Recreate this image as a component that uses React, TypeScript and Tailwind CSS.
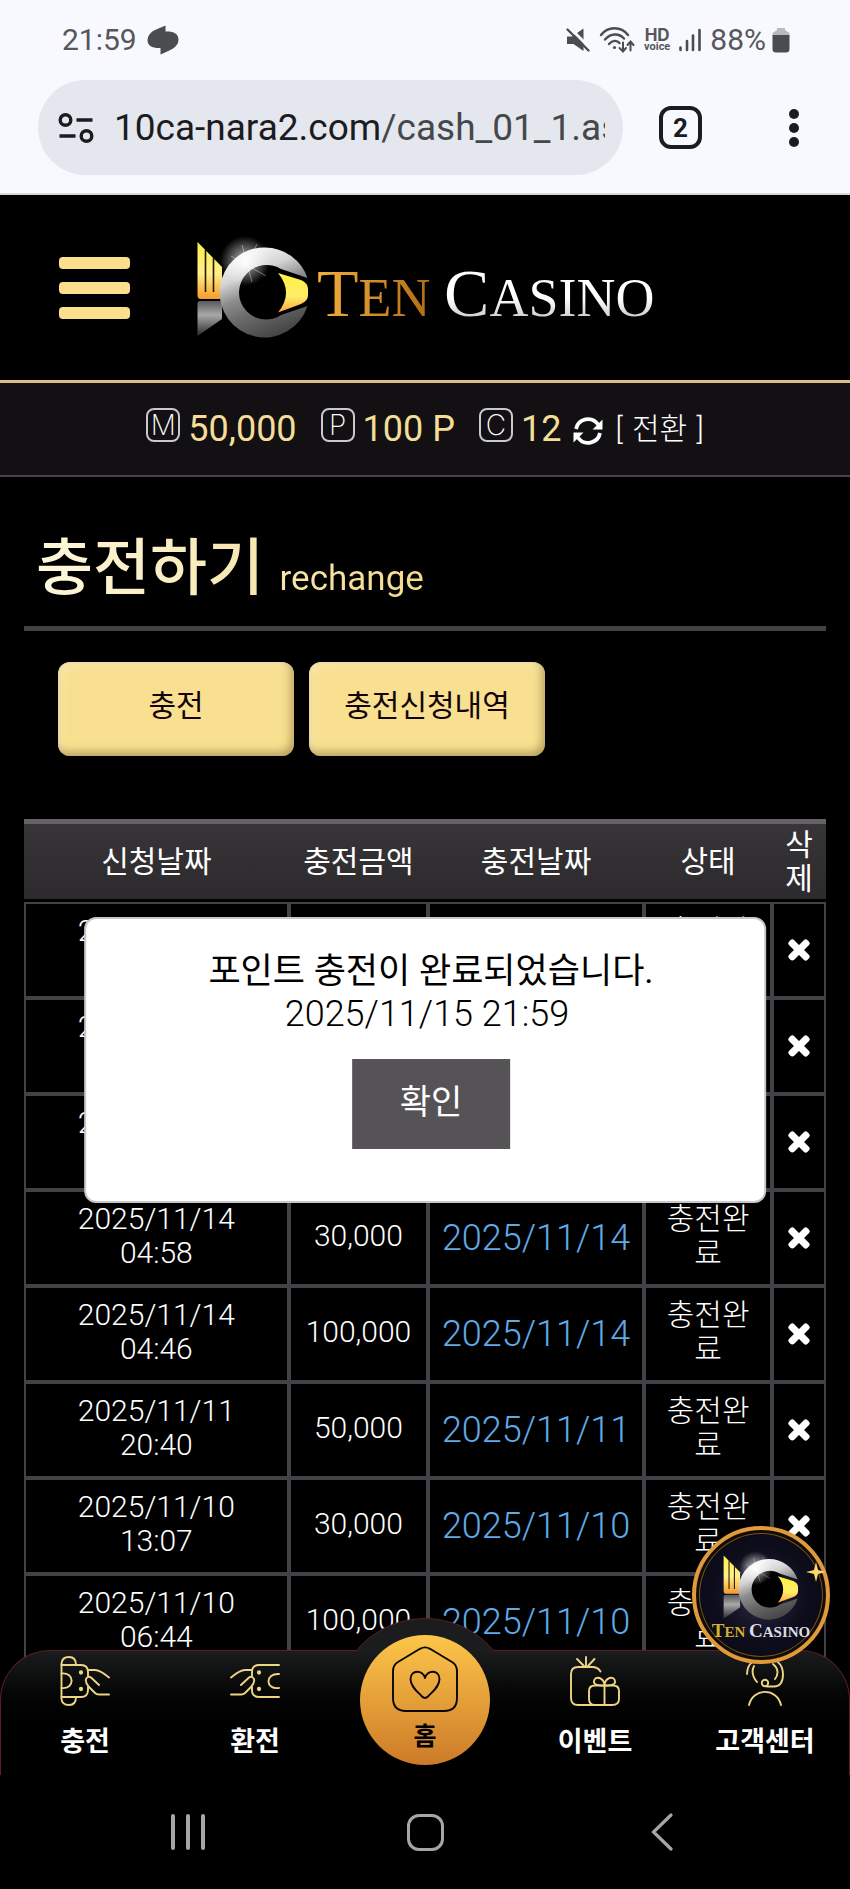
import { useId } from 'react';
import type { ReactNode } from 'react';
import { FaTimes } from 'react-icons/fa';

type Deposit = {
  requested: string;
  time: string;
  amount: string;
  charged: string;
};

const DEPOSITS: Deposit[] = [
  { requested: '2025/11/15', time: '21:58', amount: '50,000', charged: '2025/11/15' },
  { requested: '2025/11/15', time: '17:20', amount: '30,000', charged: '2025/11/15' },
  { requested: '2025/11/14', time: '22:31', amount: '50,000', charged: '2025/11/14' },
  { requested: '2025/11/14', time: '04:58', amount: '30,000', charged: '2025/11/14' },
  { requested: '2025/11/14', time: '04:46', amount: '100,000', charged: '2025/11/14' },
  { requested: '2025/11/11', time: '20:40', amount: '50,000', charged: '2025/11/11' },
  { requested: '2025/11/10', time: '13:07', amount: '30,000', charged: '2025/11/10' },
  { requested: '2025/11/10', time: '06:44', amount: '100,000', charged: '2025/11/10' },
];

const COLUMNS = [
  { label: '신청날짜', width: 'w-[33%]' },
  { label: '충전금액', width: 'w-[17.4%]' },
  { label: '충전날짜', width: 'w-[26.9%]' },
  { label: '상태', width: 'w-[16%]' },
  { label: '삭제', width: 'w-[6.7%]' },
];

function LogoMark({ className }: { className?: string }) {
  const id = useId();
  return (
    <svg viewBox="0 0 112 104" className={className} aria-hidden="true">
      <defs>
        <linearGradient id={`${id}ring`} x1="0.2" y1="0" x2="0.6" y2="1">
          <stop offset="0" stopColor="#ffffff" />
          <stop offset="0.3" stopColor="#d5d5d5" />
          <stop offset="0.5" stopColor="#8d8d8d" />
          <stop offset="0.7" stopColor="#6a6a6a" />
          <stop offset="1" stopColor="#454545" />
        </linearGradient>
        <linearGradient id={`${id}fan`} x1="0" y1="0" x2="0" y2="1">
          <stop offset="0" stopColor="#fff04a" />
          <stop offset="0.55" stopColor="#fff08a" />
          <stop offset="1" stopColor="#f59a2c" />
        </linearGradient>
        <linearGradient id={`${id}tail`} x1="0" y1="0" x2="0" y2="1">
          <stop offset="0" stopColor="#5a5a5a" />
          <stop offset="0.4" stopColor="#a8a8a8" />
          <stop offset="1" stopColor="#2a2a2a" />
        </linearGradient>
        <linearGradient id={`${id}eye`} x1="0" y1="0" x2="0" y2="1">
          <stop offset="0" stopColor="#fff23c" />
          <stop offset="0.6" stopColor="#ffec6a" />
          <stop offset="1" stopColor="#fba53a" />
        </linearGradient>
        <radialGradient id={`${id}glow`}>
          <stop offset="0" stopColor="#fff" stopOpacity="0.95" />
          <stop offset="0.4" stopColor="#fff" stopOpacity="0.45" />
          <stop offset="1" stopColor="#fff" stopOpacity="0" />
        </radialGradient>
      </defs>
      <path d="M0.5 8 L25 33 V65 H3.500 Q0.500 65 0.500 61 Z" fill={`url(#${id}fan)`} />
      <path d="M8.500 16 V58 M16.500 24 V58" stroke="#2a1a00" strokeWidth="1.600" />
      <path d="M0.500 69 Q0.500 67 3 67 H25 V85 L0.500 102 Z" fill={`url(#${id}tail)`} />
      <path
        d="M68 13.500 A45 45 0 0 1 110.500 44 L84 35 A27 27 0 1 0 84 81 L110.500 72 A45 45 0 1 1 68 13.500 Z"
        fill={`url(#${id}ring)`}
      />
      <circle cx="69" cy="58.500" r="27" fill="#000" />
      <path d="M81 39 L104 46 Q111 49 111 55 V61 Q111 67 104 70 L81 78.500 Q97 58.500 81 39 Z" fill={`url(#${id}eye)`} />
      <circle cx="48" cy="27" r="25" fill={`url(#${id}glow)`} />
      <path d="M45 11 L55 48 M34 22 L69 42 M60 10 L46 38" stroke="#fff" strokeOpacity="0.5" strokeWidth="0.800" />
    </svg>
  );
}

function BalanceItem({ mark, value }: { mark: string; value: string }) {
  return (
    <div className="flex items-center gap-2">
      <span className="grid h-[34px] w-[34px] -translate-y-1 place-items-center rounded-lg border-2 border-[#c9c8cc] font-['Inter'] text-[28px] font-extralight leading-none text-white">
        {mark}
      </span>
      <span className="text-[36px] leading-none text-[#f4de97]">{value}</span>
    </div>
  );
}

function StatusBar() {
  return (
    <div className="flex h-20 items-center justify-between pl-[62px] pr-[60px] text-[30px] leading-none text-[#56575b]">
      <div className="flex items-center gap-[10px]">
        <span>21:59</span>
        <svg viewBox="0 0 32 30" className="h-[30px] w-8" fill="#4b4c50" aria-hidden="true">
          <path d="M18.500 0.500 V6.500 C26 6 31.500 8.500 31.500 14.500 C31.500 23 22 25.500 17 28 L13.500 29.500 V23 C6 23.500 0.500 21 0.500 15.500 C0.500 7 9 4.500 14 2.500 Z" />
        </svg>
      </div>
      <div className="flex items-center gap-[9px]">
        <svg viewBox="0 0 24 24" className="h-6 w-6" aria-hidden="true">
          <path d="M1 8.500 H6 L17.500 0.500 V23 L7.500 16 H1 Z" fill="#4b4c50" />
          <path d="M3 -1 L25 21" stroke="#f8f9fe" strokeWidth="3" />
          <path d="M1.500 1.500 L22.500 22.500" stroke="#4b4c50" strokeWidth="2.400" strokeLinecap="round" />
        </svg>
        <svg viewBox="0 0 36 28" className="h-7 w-9" fill="none" stroke="#4b4c50" strokeWidth="2.400" strokeLinecap="round" aria-hidden="true">
          <path d="M2 9 C9 0 22 0 29 9 M6 13.500 C11.500 7 20 7 25 12.500 M10 18 C13.500 14 18 14 20.500 17" />
          <circle cx="15.500" cy="21.500" r="1.600" fill="#4b4c50" stroke="none" />
          <path d="M24 16.500 V25 M20.500 22 L24 25.500 L27 22 M31.500 24.500 V16 M28.500 19 L31.500 15.500 L34.500 19" strokeWidth="2" />
        </svg>
        <span className="flex flex-col items-center font-bold">
          <span className="font-['Inter'] text-[17px] leading-[14px]">HD</span>
          <span className="text-[11px] leading-[10px]">voice</span>
        </span>
        <svg viewBox="0 0 22 24" className="h-6 w-[22px]" stroke="#4b4c50" strokeWidth="2.600" strokeLinecap="round" aria-hidden="true">
          <path d="M1.500 19.500 V22 M8 13 V22 M14 7.500 V22 M20.500 2 V22" />
        </svg>
        <span className="flex items-center gap-[6px]">
          88%
          <svg viewBox="0 0 18 26" className="h-[26px] w-[18px]" aria-hidden="true">
            <path d="M5 1 H13 V3 L17.500 6 V9 H0.500 V6 L5 3 Z" fill="#b9babe" />
            <path d="M0.500 8 H17.500 V22 Q17.500 25.500 14 25.500 H4 Q0.500 25.500 0.500 22 Z" fill="#4b4c50" />
          </svg>
        </span>
      </div>
    </div>
  );
}

function BrowserBar() {
  return (
    <div className="flex h-[95px] items-center pl-[38px] pr-[42px]">
      <button
        type="button"
        className="flex h-full min-w-0 flex-1 items-center gap-5 rounded-full bg-[#e5e7ee] pl-5 pr-[18px] text-left"
      >
        <svg viewBox="0 0 36 30" className="h-[30px] w-9 shrink-0" fill="none" stroke="#1b1c21" strokeWidth="3.400" aria-hidden="true">
          <circle cx="7.500" cy="7" r="5.300" />
          <circle cx="28.500" cy="23" r="5.300" />
          <path d="M18.500 7 H34.500 M1.500 23 H17.500" />
        </svg>
        <span className="overflow-hidden whitespace-nowrap text-[37px] leading-[56px] text-[#1b1c21]">
          10ca-nara2.com<span className="text-[#44474c]">/cash_01_1.as</span>
        </span>
      </button>
      <button
        type="button"
        aria-label="탭 2개"
        className="ml-9 grid h-[43px] w-[43px] place-items-center rounded-xl border-4 border-[#1b1c21] text-[26px] font-bold leading-none text-[#1b1c21]"
      >
        2
      </button>
      <button type="button" aria-label="메뉴" className="ml-[78px] grid w-7 place-items-center gap-1">
        <span className="h-[10px] w-[10px] rounded-full bg-[#1b1c21]" />
        <span className="h-[10px] w-[10px] rounded-full bg-[#1b1c21]" />
        <span className="h-[10px] w-[10px] rounded-full bg-[#1b1c21]" />
      </button>
    </div>
  );
}

function SiteHeader() {
  return (
    <header>
      <div className="flex h-[185px] items-center pl-[59px]">
        <button type="button" aria-label="전체 메뉴" className="grid w-[71px] gap-[13px]">
          <span className="h-3 rounded-sm bg-[#fbdf8c]" />
          <span className="h-3 rounded-sm bg-[#fbdf8c]" />
          <span className="h-3 rounded-sm bg-[#fbdf8c]" />
        </button>
        <a href="#home" className="ml-[67px] flex items-center">
          <LogoMark className="mb-1 h-[104px] w-[112px]" />
          <span className="mt-4 ml-2 whitespace-nowrap font-['Liberation_Serif',serif] text-[54px] leading-[80px]">
            <span className="bg-linear-to-r from-[#f5b03c] to-[#b06d14] bg-clip-text text-transparent">
              <span className="text-[68px]">T</span>EN
            </span>{' '}
            <span className="bg-linear-to-b from-white from-50% to-[#b5b5b5] bg-clip-text text-transparent">
              <span className="text-[68px]">C</span>ASINO
            </span>
          </span>
        </a>
      </div>
      <div className="flex h-[97px] items-center justify-center gap-6 border-t-[3px] border-b-2 border-t-[#dcbd85] border-b-[#47454a] bg-[#121013]">
        <BalanceItem mark="M" value="50,000" />
        <BalanceItem mark="P" value="100 P" />
        <div className="flex items-center gap-3">
          <BalanceItem mark="C" value="12" />
          <button type="button" className="flex items-center gap-3 text-[30px] font-light leading-none text-white">
            <svg viewBox="0 0 30 30" className="h-[30px] w-[30px] translate-y-0.5" fill="none" stroke="#fff" strokeWidth="3.800" aria-hidden="true">
              <path d="M3 13 A12.200 12.200 0 0 1 25 8.500 M27 17 A12.200 12.200 0 0 1 5 21.500" />
              <path d="M29.500 3.500 V13.500 H19.500 Z M0.500 26.500 V16.500 H10.500 Z" fill="#fff" stroke="none" />
            </svg>
            <span>
              [ <span className="mx-0.5">전환</span> ]
            </span>
          </button>
        </div>
      </div>
    </header>
  );
}

function GoldButton({ children }: { children: ReactNode }) {
  return (
    <button
      type="button"
      className="h-[94px] w-[236px] rounded-xl bg-[#f8e090] pb-2 text-[30px] text-[#120408] shadow-[inset_-3px_-4px_8px_rgba(120,95,40,0.5),inset_3px_3px_8px_rgba(255,240,200,0.7)]"
    >
      {children}
    </button>
  );
}

function DepositTable() {
  return (
    <table className="w-full table-fixed border-separate border-spacing-0 text-center text-[30px] leading-[34px] text-white">
      <thead>
        <tr className="h-[83px]">
          {COLUMNS.map((col) => (
            <th
              key={col.label}
              className={`${col.width} border-t-[5px] border-b-[3px] border-t-[#656366] border-b-black bg-linear-to-b from-[#373538] to-[#2c2a2d] bg-clip-padding p-0 font-normal`}
            >
              {col.label}
            </th>
          ))}
        </tr>
      </thead>
      <tbody className="font-light">
        {DEPOSITS.map((row) => (
          <tr key={`${row.requested} ${row.time}`} className="h-24">
            <td className="border-2 border-[#444246] px-10 pt-0 pb-1">
              {row.requested} {row.time}
            </td>
            <td className="border-2 border-[#444246] p-0 pb-1">{row.amount}</td>
            <td className="border-2 border-[#444246] p-0 text-[36px] text-[#5eaae6]">{row.charged}</td>
            <td className="border-2 border-[#444246] px-4 pt-0 pb-1">충전완료</td>
            <td className="border-2 border-[#444246] p-0 pb-1">
              <button type="button" aria-label="삭제" className="inline-grid place-items-center align-middle">
                <FaTimes className="h-7 w-7" stroke="currentColor" strokeWidth="36" />
              </button>
            </td>
          </tr>
        ))}
      </tbody>
    </table>
  );
}

function ConfirmDialog() {
  return (
    <div
      role="dialog"
      aria-label="충전 완료"
      className="absolute top-[98px] left-1/2 flex h-[286px] w-[85%] -translate-x-1/2 flex-col items-center rounded-xl border-2 border-[#c9c7c9] bg-white pt-8 pl-3 text-black"
    >
      <p className="text-[35px] leading-[42px]">포인트 충전이 완료되었습니다.</p>
      <p className="pr-2 text-[36px] font-light leading-[42px]">2025/11/15 21:59</p>
      <button type="button" className="mt-6 h-[90px] w-[158px] bg-[#565356] pb-1 text-[34px] text-white">
        확인
      </button>
    </div>
  );
}

function NavIcon({ children }: { children: ReactNode }) {
  return (
    <svg
      viewBox="0 0 50 50"
      className="h-[50px] w-[50px]"
      fill="none"
      stroke="#eed583"
      strokeWidth="1.900"
      strokeLinecap="round"
      strokeLinejoin="round"
      aria-hidden="true"
    >
      {children}
    </svg>
  );
}

function NavLink({ label, children }: { label: string; children: ReactNode }) {
  return (
    <a href="#menu" className="flex flex-1 flex-col items-center gap-4 pt-[6px] text-[27px] font-bold leading-[40px] text-white">
      {children}
      {label}
    </a>
  );
}

function BottomNav() {
  return (
    <nav className="absolute inset-x-0 bottom-0 h-[125px]">
      <div className="absolute inset-0 rounded-t-[50px] border border-b-0 border-[#5c1e22] bg-linear-to-b from-[#1b1c1d] to-black to-75%" />
      {/* raised arc behind the home button */}
      <div className="absolute -top-8 left-1/2 h-[34px] w-[142px] -translate-x-1/2 overflow-hidden">
        <div className="absolute top-0 left-1/2 h-[180px] w-[180px] -translate-x-1/2 rounded-full border border-[#5c1e22] bg-[#1b1c1d]" />
      </div>
      <div className="relative flex h-full">
        <NavLink label="충전">
          <NavIcon>
            <path d="M1.500 9 V41 M1.500 9 H21 Q28 9 28 16 V20 M28 31 V34 Q28 41 21 41 H1.500" />
            <path d="M1.500 9 V7.500 Q2 1 9 1 Q16 1 16 9 M1.500 41 V43 Q2 49 9 49 Q16 49 16 41" />
            <path d="M1.500 17.500 C15 16 15 33.500 1.500 32" />
            <path d="M28 14 H35 Q40 14 49 21.500 M39 29 L31 21.500 Q28 19.500 26 23 Q25 27 29 31 L35 37 Q36.500 38.500 39 38.500 H49" />
            <circle cx="21" cy="16.500" r="1.200" fill="#eed583" />
            <circle cx="21" cy="33" r="1.200" fill="#eed583" />
          </NavIcon>
        </NavLink>
        <NavLink label="환전">
          <NavIcon>
            <path d="M49 9 H29 Q22 9 22 16 V20 M22 31 V34 Q22 41 29 41 H49" />
            <path d="M49 18 C35 17 35 34 49 32" />
            <path d="M22 14 H15 Q10 14 1 21.500 M11 29 L19 21.500 Q22 19.500 24 23 Q25 27 21 31 L15 37 Q13.500 38.500 11 38.500 H1" />
            <circle cx="29" cy="16.500" r="1.200" fill="#eed583" />
            <circle cx="29" cy="33" r="1.200" fill="#eed583" />
          </NavIcon>
        </NavLink>
        <div className="relative flex-1">
          <a
            href="#home"
            className="absolute -top-[15px] left-1/2 flex h-[130px] w-[130px] -translate-x-1/2 flex-col items-center rounded-full bg-linear-to-b from-[#fdc64a] to-[#cc7a28] pt-[11px] text-[25px] font-bold leading-[50px] text-black"
          >
            <svg viewBox="0 0 66 66" className="h-[66px] w-[66px] shrink-0" fill="none" stroke="#0a0500" strokeWidth="1.900" strokeLinejoin="round" aria-hidden="true">
              <path d="M28 2.800 Q33 0 38 2.800 L60 16 Q65 19 65 25 V52 Q65 65 52 65 H14 Q1 65 1 52 V25 Q1 19 6 16 Z" />
              <path d="M33 32 C31 24 19 23 18.500 33 C18.500 41 26 46 30 50.500 Q33 53.500 36 50.500 C40 46 47.500 41 47.500 33 C47 23 35 24 33 32 Z" />
            </svg>
            홈
          </a>
        </div>
        <NavLink label="이벤트">
          <NavIcon>
            <path d="M16 10 V1 M14 10 L7 3 M18 10 L24.500 3" />
            <path d="M30.500 15.500 Q28 11 22 11 H8 Q1 11 1 18 V42 Q1 49 8 49 H42 Q49 49 49 43 V35 Q49 29.500 43 29.500 H25 Q19 29.500 19 35 V43 Q19 49 25 49" />
            <path d="M34.500 29.500 V49 M34.500 29.500 C30 30 23 29 24 25 C25 19.500 34 21 34.500 29.500 C35 21 44 19.500 45 25 C46 29 39 30 34.500 29.500" />
          </NavIcon>
        </NavLink>
        <NavLink label="고객센터">
          <NavIcon>
            <path d="M7 18 C7 -4 43 -4 43 18 C43 26 40 30.500 34 30.500 H27" />
            <path d="M17 26 C12 20 12 14 14 10 M33 8 C38 12 39 18 35 23" />
            <circle cx="25" cy="27" r="3.200" />
            <path d="M9 49 C13 31.500 37 31.500 41 49" />
          </NavIcon>
        </NavLink>
      </div>
      <a
        href="#top"
        className="absolute -top-[124px] right-5 flex h-[138px] w-[138px] flex-col items-center rounded-full border-4 border-[#e09a3c] bg-radial from-[#2d2b45] via-[#0e0d1c] to-[#07060d] pt-5 shadow-[inset_0_0_0_3px_#120c08,inset_0_0_0_4px_#77501f]"
      >
        <LogoMark className="h-[70px] w-[80px]" />
        <span className="whitespace-nowrap font-['Liberation_Serif',serif] text-[15px] font-bold leading-[22px] text-[#dcdce4]">
          <span className="text-[#d3b32b]">
            <span className="text-[19px]">T</span>EN
          </span>{' '}
          <span className="text-[19px]">C</span>ASINO
        </span>
        <svg viewBox="0 0 20 20" className="absolute top-8 right-0 h-5 w-5" fill="#ffd76a" aria-hidden="true">
          <path d="M10 0 L12 8 L20 10 L12 12 L10 20 L8 12 L0 10 L8 8 Z" />
        </svg>
      </a>
    </nav>
  );
}

function SystemBar() {
  return (
    <div className="flex h-[114px] shrink-0 items-center bg-black px-[70px] text-[#a8a5a9]">
      <button type="button" aria-label="최근 앱" className="flex h-9 flex-1 justify-center gap-[11px]">
        <span className="w-1 rounded-full bg-current" />
        <span className="w-1 rounded-full bg-current" />
        <span className="w-1 rounded-full bg-current" />
      </button>
      <button type="button" aria-label="홈 화면" className="flex flex-1 justify-center">
        <span className="h-[37px] w-[37px] rounded-xl border-[3px] border-current" />
      </button>
      <button type="button" aria-label="뒤로" className="flex flex-1 justify-center">
        <svg viewBox="0 0 22 38" className="h-[38px] w-[22px]" fill="none" stroke="currentColor" strokeWidth="3.200" strokeLinecap="round" aria-hidden="true">
          <path d="M20 2 L2.500 19 L20 36" />
        </svg>
      </button>
    </div>
  );
}

export default function App() {
  return (
    <div className="flex h-screen flex-col overflow-hidden bg-black font-['Roboto','Noto_Sans_CJK_KR',sans-serif]">
      <div className="h-[195px] shrink-0 border-b-2 border-[#d5d8da] bg-[#f8f9fe]">
        <StatusBar />
        <BrowserBar />
      </div>
      <div className="relative min-h-0 flex-1 overflow-hidden">
        <SiteHeader />
        <main className="px-6">
          <div className="border-b-[5px] border-[#444246] pt-[52px] pb-[17px] pl-3">
            <h1 className="w-fit bg-linear-to-r from-[#fdf8dc] to-[#f3da8c] bg-clip-text text-[62px] font-medium leading-[80px] text-transparent">
              충전하기 <span className="text-[35px] font-normal leading-none">rechange</span>
            </h1>
          </div>
          <div className="flex gap-[15px] pt-[31px] pl-[34px]">
            <GoldButton>충전</GoldButton>
            <GoldButton>충전신청내역</GoldButton>
          </div>
          <div className="relative mt-[63px]">
            <DepositTable />
            <ConfirmDialog />
          </div>
        </main>
        <BottomNav />
      </div>
      <SystemBar />
    </div>
  );
}
